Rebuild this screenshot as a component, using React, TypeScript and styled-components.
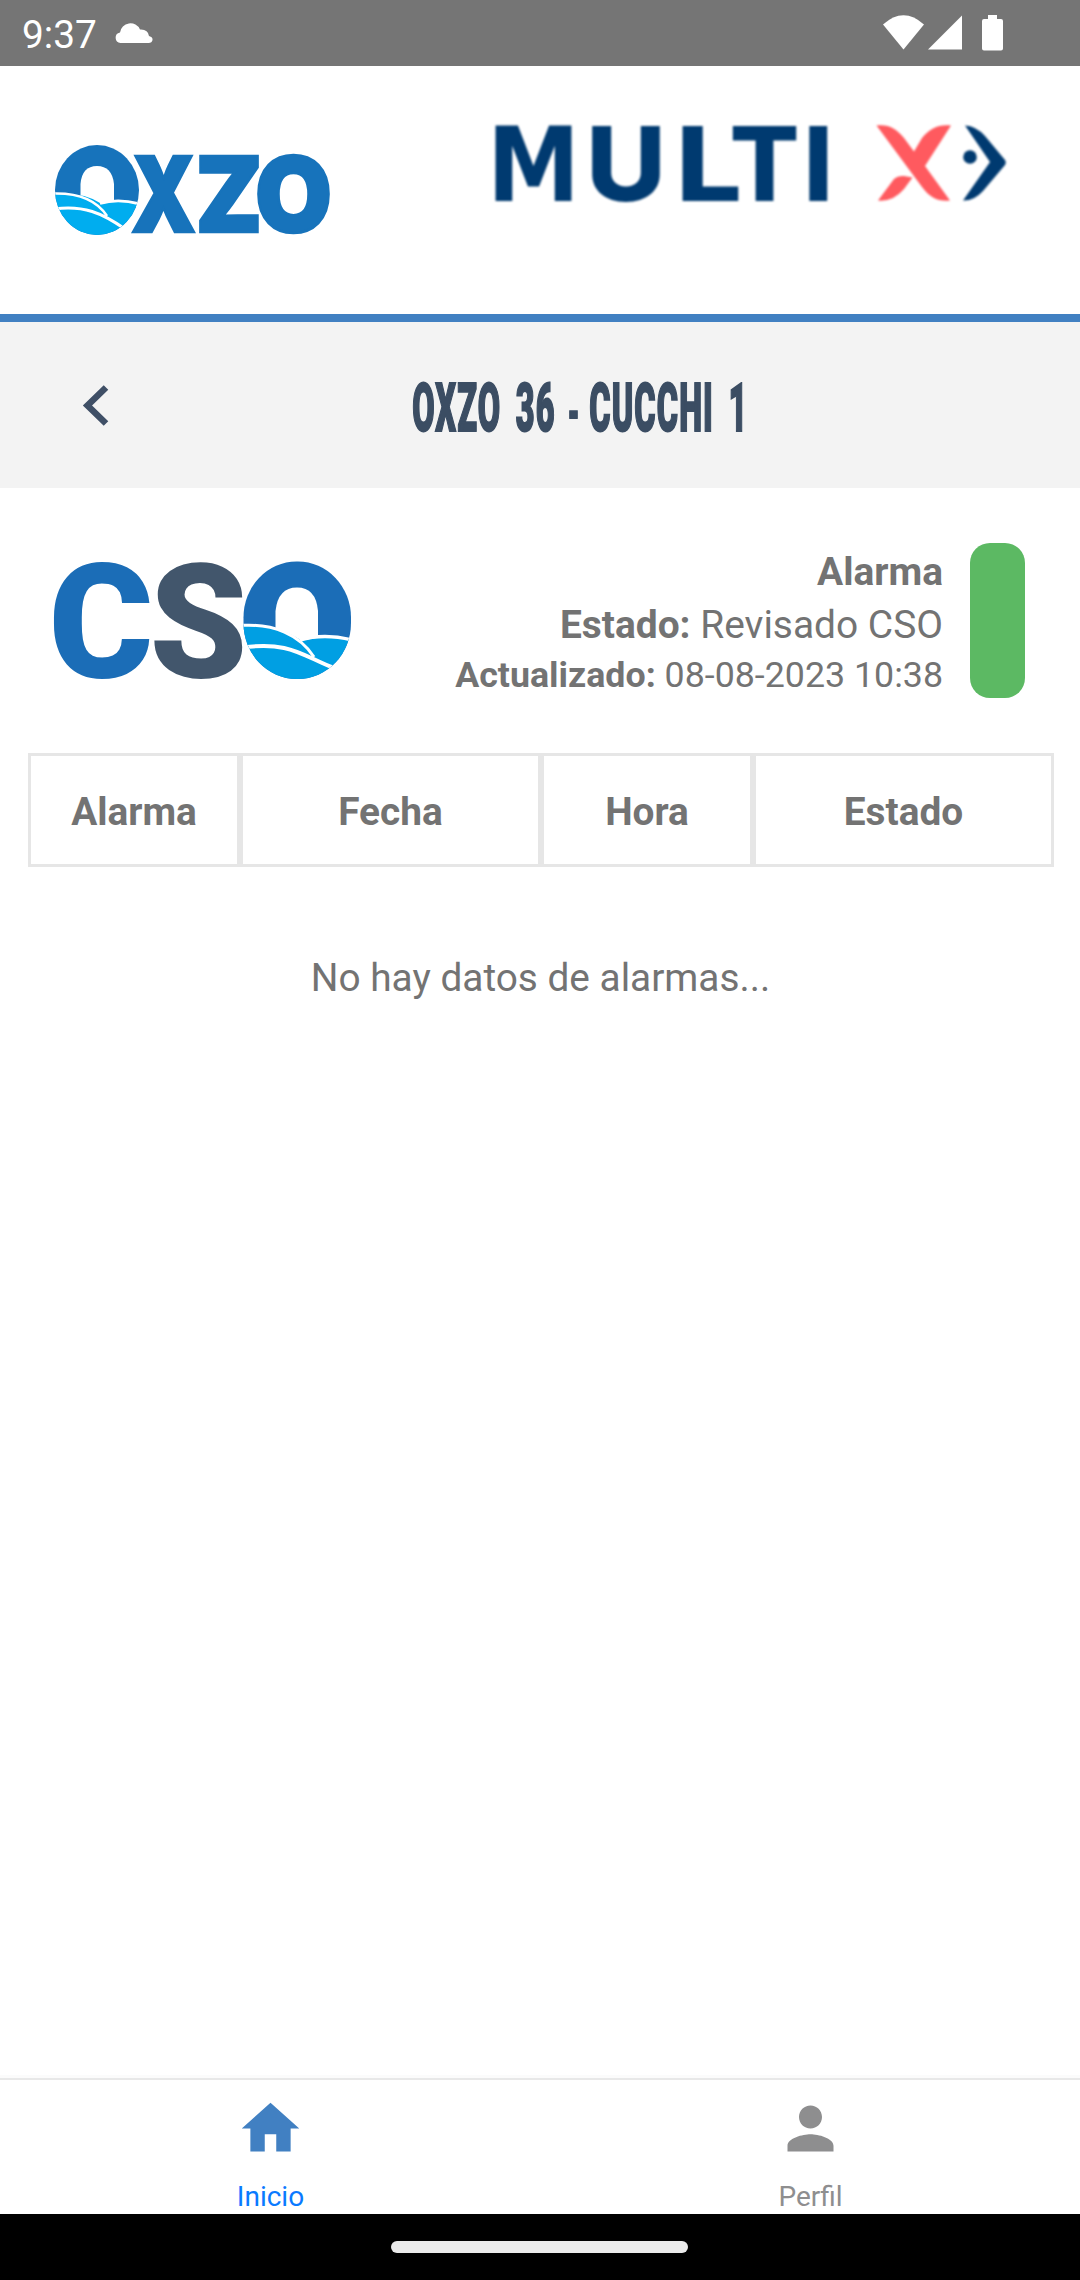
import React from "react";
import styled, { createGlobalStyle } from "styled-components";

const GlobalStyle = createGlobalStyle`
  *, *::before, *::after { box-sizing: border-box; }
  body { margin: 0; background: #fff; }
`;

const Screen = styled.div`
  width: 1080px;
  height: 2280px;
  display: flex;
  flex-direction: column;
  background: #fff;
  color: #737373;
  font-family: Roboto, "Liberation Sans", sans-serif;
  font-size: 38.8px;
  overflow: hidden;
`;

const StatusBar = styled.div`
  height: 66px;
  flex: none;
  display: flex;
  justify-content: space-between;
  background: #757575;
  color: #fff;
  padding: 0 76px 0 22px;
`;

const StatusGroup = styled.div`
  display: flex;
  align-items: center;
`;

const Clock = styled.span`
  line-height: 66px;
  margin-right: 18px;
  padding-top: 3px;
`;

const BrandHeader = styled.header`
  height: 256px;
  flex: none;
  display: flex;
  align-items: flex-start;
  border-bottom: 8px solid #4180c2;
`;

const Logo = styled.svg<{ $top: number; $left: number; $soft?: boolean }>`
  display: block;
  flex: none;
  overflow: visible;
  margin-top: ${(p) => p.$top}px;
  margin-left: ${(p) => p.$left}px;
  filter: ${(p) => (p.$soft ? "blur(0.8px)" : "none")};
`;

const TitleBar = styled.div`
  height: 166px;
  flex: none;
  display: flex;
  align-items: center;
  background: #f3f3f3;
  padding-left: 76px;
`;

const BackButton = styled.button`
  width: 40px;
  height: 50px;
  padding: 0;
  border: 0;
  background: none;
  color: #3f4f66;
`;

const Title = styled.h1`
  margin: 0;
  width: 925px;
  padding: 6px 0 0 4px;
  display: flex;
  justify-content: center;
  color: #3b4d63;
  font-size: 67.5px;
  font-weight: 900;
  line-height: 80px;
  white-space: nowrap;
`;

const Condensed = styled.span`
  display: block;
  letter-spacing: 2.4px;
  word-spacing: 11px;
  -webkit-text-stroke: 2px #3b4d63;
  transform: scaleX(0.48);
`;

const Dash = styled.span`
  margin: 0 -12px 0 -5px;
  font-size: 54px;
  line-height: 1;
`;

const Summary = styled.section`
  height: 265px;
  flex: none;
  display: flex;
  align-items: flex-start;
`;

const SummaryText = styled.div`
  flex: 1;
  margin-top: 57px;
  display: flex;
  flex-direction: column;
  align-items: flex-end;
`;

const SummaryLine = styled.p<{ $size?: number; $height?: number }>`
  margin: 0;
  font-size: ${(p) => p.$size ?? 38.9}px;
  line-height: ${(p) => p.$height ?? 53}px;
  white-space: nowrap;
`;

const StatusPill = styled.div`
  width: 55px;
  height: 155px;
  margin: 55px 55px 0 27px;
  border-radius: 20px;
  background: #5cb963;
`;

const Table = styled.div`
  height: 114px;
  flex: none;
  margin: 0 26px 0 28px;
  display: grid;
  grid-template-columns: 212px 301px 212px 301px;
`;

const HeadCell = styled.div`
  display: flex;
  align-items: center;
  justify-content: center;
  border: 3px solid #e6e6e6;
  font-weight: 700;
  padding-top: 2px;
`;

const Empty = styled.p`
  flex: 1;
  margin: 0;
  padding: 88px 0 0 1px;
  text-align: center;
  line-height: 46px;
`;

const TabBar = styled.nav`
  height: 136px;
  flex: none;
  display: grid;
  grid-template-columns: 1fr 1fr;
  border-top: 2px solid #e8e8e8;
  box-shadow: 0 -3px 0 #fbfbfb;
`;

const Tab = styled.a<{ $active?: boolean }>`
  display: flex;
  flex-direction: column;
  align-items: center;
  padding: 14px 0 0 1px;
  font-size: 28px;
  line-height: 32px;
  color: ${(p) => (p.$active ? "#0a7aff" : "#8e8e8f")};
`;

const TabIcon = styled.svg<{ $active?: boolean }>`
  width: 69px;
  height: 69px;
  margin-bottom: 18px;
  fill: ${(p) => (p.$active ? "#4180c2" : "#8e8e8f")};
`;

const SystemBar = styled.div`
  height: 66px;
  flex: none;
  display: flex;
  justify-content: center;
  align-items: center;
  padding-right: 1px;
  background: #000;
`;

const Handle = styled.div`
  width: 297px;
  height: 12px;
  border-radius: 6px;
  background: #ebebeb;
`;

function OxzoLogo() {
  return (
    <Logo $top={54} $left={50} width="294" height="140" viewBox="50 120 294 140" role="img" aria-label="OXZO">
      <defs>
        <clipPath id="oxzoRound">
          <ellipse cx="97" cy="190" rx="42" ry="45" />
        </clipPath>
      </defs>
      <g clipPath="url(#oxzoRound)">
        <rect x="54" y="144" width="88" height="92" fill="#1773bb" />
        <path d="M80.500 205V184Q82 166 97 166Q112 166 114 184V205Z" fill="#fff" />
        <path d="M54 193.500Q84 192 102 204Q120 198 140 203V240H54Z" fill="#00adef" />
        <path d="M54 193.500C78 193 96 199 107 216" fill="none" stroke="#fff" strokeWidth="2.600" />
        <path d="M100 203.500Q118 198 140 204" fill="none" stroke="#fff" strokeWidth="2.800" />
        <path d="M54 209C84 205 102 213 125 229" fill="none" stroke="#fff" strokeWidth="3" />
      </g>
      <text y="231.500" fontFamily="Inter, sans-serif" fontWeight="900" fontSize="104" fill="#1773bb" stroke="#1773bb" strokeWidth="2.500">
        <tspan x="131" textLength="65" lengthAdjust="spacingAndGlyphs">X</tspan>
        <tspan x="195.500" textLength="67" lengthAdjust="spacingAndGlyphs">Z</tspan>
        <tspan x="255" textLength="77" lengthAdjust="spacingAndGlyphs">O</tspan>
      </text>
    </Logo>
  );
}

function MultiXLogo() {
  return (
    <Logo $soft $top={24} $left={140} width="530" height="140" viewBox="484 90 530 140" role="img" aria-label="MULTI X">
      <text y="200.500" fill="#003a70" fontFamily="Inter, sans-serif" fontWeight="800" fontSize="103.500">
        <tspan x="487" textLength="93" lengthAdjust="spacingAndGlyphs" fontFamily="DejaVu Sans, sans-serif" fontWeight="700">M</tspan>
        <tspan x="586" textLength="80" lengthAdjust="spacingAndGlyphs">U</tspan>
        <tspan x="676" textLength="66" lengthAdjust="spacingAndGlyphs">L</tspan>
        <tspan x="729.500">T</tspan>
        <tspan x="803.500">I</tspan>
      </text>
      <g fill="#ff5a5f">
        <path d="M876.500 125.500C888 124 896 128 904 138L914 151.500L922 138C930 128 939 124 951 125.500L925 166L950 200.500C939 202 930 198 922 187Z" />
        <path d="M878 200.500L894 179Q898 175.500 904 176L912.500 177.500L904 189Q893 202 878 200.500Z" />
      </g>
      <g fill="#003a70">
        <path d="M965 125.500Q976 126 985 136L1005 160Q1006.500 162.500 1005 165L983 191Q974 201 963 200.500L990 162Z" />
        <circle cx="970" cy="157" r="6.800" />
      </g>
    </Logo>
  );
}

function CsoLogo() {
  return (
    <Logo $top={32} $left={40} width="316" height="200" viewBox="40 520 316 200" role="img" aria-label="CSO">
      <defs>
        <clipPath id="csoRound">
          <rect x="243.500" y="561.500" width="107.500" height="117.500" rx="53" ry="56" />
        </clipPath>
      </defs>
      <text y="677" fontFamily="Roboto, sans-serif" fontWeight="900" fontSize="160.500" fill="#1b6db7">
        <tspan x="48.500" textLength="105" lengthAdjust="spacingAndGlyphs">C</tspan>
        <tspan x="149.500" textLength="98" lengthAdjust="spacingAndGlyphs" fill="#42566c">S</tspan>
      </text>
      <g clipPath="url(#csoRound)">
        <rect x="240" y="558" width="116" height="126" fill="#1b6db7" />
        <path d="M275.500 640V611Q278 587.500 297 587.500Q316 587.500 318 611V640Z" fill="#fff" />
        <path d="M240 625Q275 622 302 641Q326 634 354 639V684H240Z" fill="#009fe3" />
        <path d="M240 625.500C274 623 300 635 314 657" fill="none" stroke="#fff" strokeWidth="3" />
        <path d="M300 640Q324 633 352 640" fill="none" stroke="#fff" strokeWidth="3.500" />
        <path d="M240 648C290 640 304 657 334 668" fill="none" stroke="#fff" strokeWidth="4" />
      </g>
    </Logo>
  );
}

const columns = ["Alarma", "Fecha", "Hora", "Estado"];

export default function App() {
  return (
    <Screen>
      <GlobalStyle />
      <StatusBar>
        <StatusGroup>
          <Clock>9:37</Clock>
          <svg width="38" height="22" viewBox="0 0 38 22" fill="#fff">
            <path d="M5.500 21A5.300 5.300 0 0 1 5 10.500A10.500 10.500 0 0 1 25 7.500Q33 7 34 14Q38 15 37.500 18Q37 21 33.500 21Z" />
          </svg>
        </StatusGroup>
        <StatusGroup>
          <svg width="121" height="36" viewBox="883 15 121 36" fill="#fff">
            <path d="M883 24.500Q903.500 6 924 24.500L903.500 49.500Z" />
            <path d="M928 49.500L962 15.500V49.500Z" />
            <path d="M988 15H997V19H1001Q1003 19 1003 21V48.500Q1003 50.500 1001 50.500H984Q982 50.500 982 48.500V21Q982 19 984 19H988Z" />
          </svg>
        </StatusGroup>
      </StatusBar>
      <BrandHeader>
        <OxzoLogo />
        <MultiXLogo />
      </BrandHeader>
      <TitleBar>
        <BackButton aria-label="Volver">
          <svg width="40" height="50" viewBox="76 380 40 50" fill="none" stroke="currentColor" strokeWidth="6.500">
            <path d="M106 387.500L87.500 405.500L106 423.500" />
          </svg>
        </BackButton>
        <Title>
          <Condensed>OXZO 36 <Dash>-</Dash> CUCCHI 1</Condensed>
        </Title>
      </TitleBar>
      <Summary>
        <CsoLogo />
        <SummaryText>
          <SummaryLine><b>Alarma</b></SummaryLine>
          <SummaryLine><b>Estado:</b> Revisado CSO</SummaryLine>
          <SummaryLine $size={35.75} $height={49}><b>Actualizado:</b> 08-08-2023 10:38</SummaryLine>
        </SummaryText>
        <StatusPill />
      </Summary>
      <Table>
        {columns.map((c) => (
          <HeadCell key={c}>{c}</HeadCell>
        ))}
      </Table>
      <Empty>No hay datos de alarmas...</Empty>
      <TabBar>
        <Tab $active>
          <TabIcon $active viewBox="0 0 24 24"><path d="M10 20v-6h4v6h5v-8h3L12 3 2 12h3v8z" /></TabIcon>
          Inicio
        </Tab>
        <Tab>
          <TabIcon viewBox="0 0 24 24"><path d="M12 12c2.210 0 4-1.790 4-4s-1.790-4-4-4-4 1.790-4 4 1.790 4 4 4zm0 2c-2.670 0-8 1.340-8 4v2h16v-2c0-2.660-5.330-4-8-4z" /></TabIcon>
          Perfil
        </Tab>
      </TabBar>
      <SystemBar>
        <Handle />
      </SystemBar>
    </Screen>
  );
}
